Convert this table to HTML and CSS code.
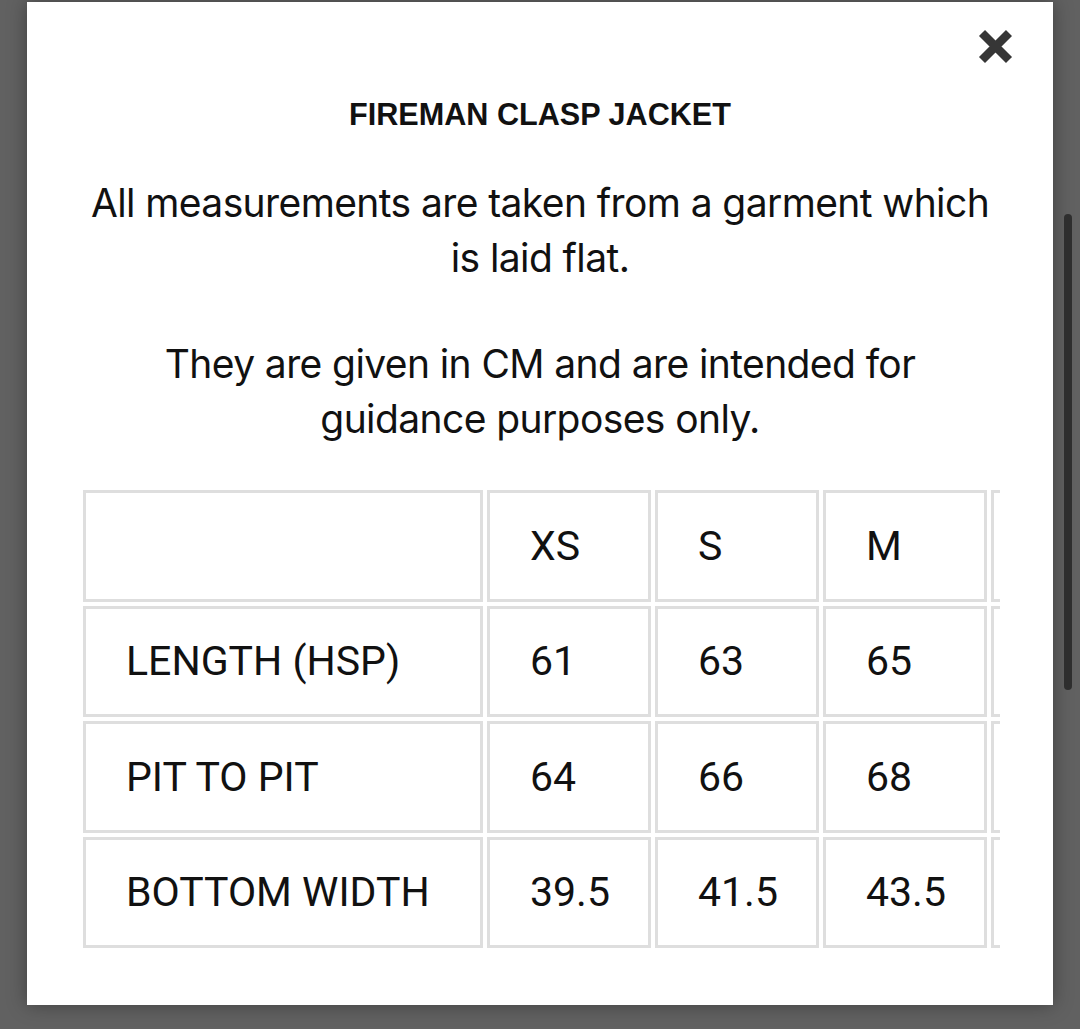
FILE: index.html
```html
<!DOCTYPE html>
<html lang="en">
<head>
<meta charset="utf-8">
<title>Size guide</title>
<link rel="stylesheet" href="styles.css">
</head>
<body>
<div class="page">
  <div class="modal">
    <button class="close" aria-label="Close">
      <svg width="37" height="37" viewBox="0 0 37 37">
        <path d="M5 5 L32 32 M32 5 L5 32" stroke="#363636" stroke-width="8.5" stroke-linecap="butt" fill="none"/>
      </svg>
    </button>
    <h1 class="title">FIREMAN CLASP JACKET</h1>
    <p class="note">All measurements are taken from a garment which is laid flat.</p>
    <p class="note">They are given in CM and are intended for guidance purposes only.</p>
    <div class="table-wrap">
      <table class="sizes">
        <tr><td class="label"></td><td>XS</td><td>S</td><td>M</td><td class="more"></td></tr>
        <tr><td class="label">LENGTH (HSP)</td><td>61</td><td>63</td><td>65</td><td class="more"></td></tr>
        <tr><td class="label">PIT TO PIT</td><td>64</td><td>66</td><td>68</td><td class="more"></td></tr>
        <tr><td class="label">BOTTOM WIDTH</td><td>39.5</td><td>41.5</td><td>43.5</td><td class="more"></td></tr>
      </table>
    </div>
  </div>
  <div class="scroll-thumb"></div>
</div>
</body>
</html>
```
FILE: styles.css
```css
html, body {
  margin: 0;
  padding: 0;
}
body {
  background: #616161;
  width: 1080px;
  height: 1029px;
  overflow: hidden;
}
.page {
  position: relative;
  width: 1080px;
  height: 1029px;
  padding-top: 2px;
  box-sizing: border-box;
}
.modal {
  position: relative;
  margin-left: 27px;
  width: 1026px;
  height: 1003px;
  background: #fff;
  box-shadow: 0 0 18px rgba(0, 0, 0, 0.35);
  padding-top: 94px;
  box-sizing: border-box;
}
.close {
  position: absolute;
  top: 26px;
  right: 39px;
  width: 37px;
  height: 37px;
  padding: 0;
  border: 0;
  background: none;
}
.close svg { display: block; }
.title {
  margin: 0;
  font-family: "Liberation Sans", Arial, sans-serif;
  font-weight: bold;
  font-size: 30.6px;
  line-height: 36px;
  text-align: center;
  color: #111;
}
.note {
  margin: 43px 0 0;
  padding: 0 57px;
  font-family: Inter, "Noto Sans", sans-serif;
  font-size: 39px;
  line-height: 55px;
  letter-spacing: -0.6px;
  text-align: center;
  color: #111;
}
.note + .note {
  margin-top: 51px;
}
.table-wrap {
  margin: 40px 53px 0 52px;
  overflow: hidden;
}
.sizes {
  border-collapse: separate;
  border-spacing: 4px;
  font-family: Roboto, "Liberation Sans", sans-serif;
  font-size: 41px;
  color: #111;
}
.sizes td {
  border: 3px solid #dedede;
  width: 164px;
  min-width: 164px;
  max-width: 164px;
  height: 111.5px;
  padding: 0 0 0 40px;
  box-sizing: border-box;
  vertical-align: middle;
  white-space: nowrap;
}
.sizes td.label {
  width: 400px;
  min-width: 400px;
  max-width: 400px;
}
.scroll-thumb {
  position: absolute;
  left: 1064px;
  top: 214px;
  width: 8px;
  height: 476px;
  border-radius: 4px;
  background: #2e2e2e;
}
```
